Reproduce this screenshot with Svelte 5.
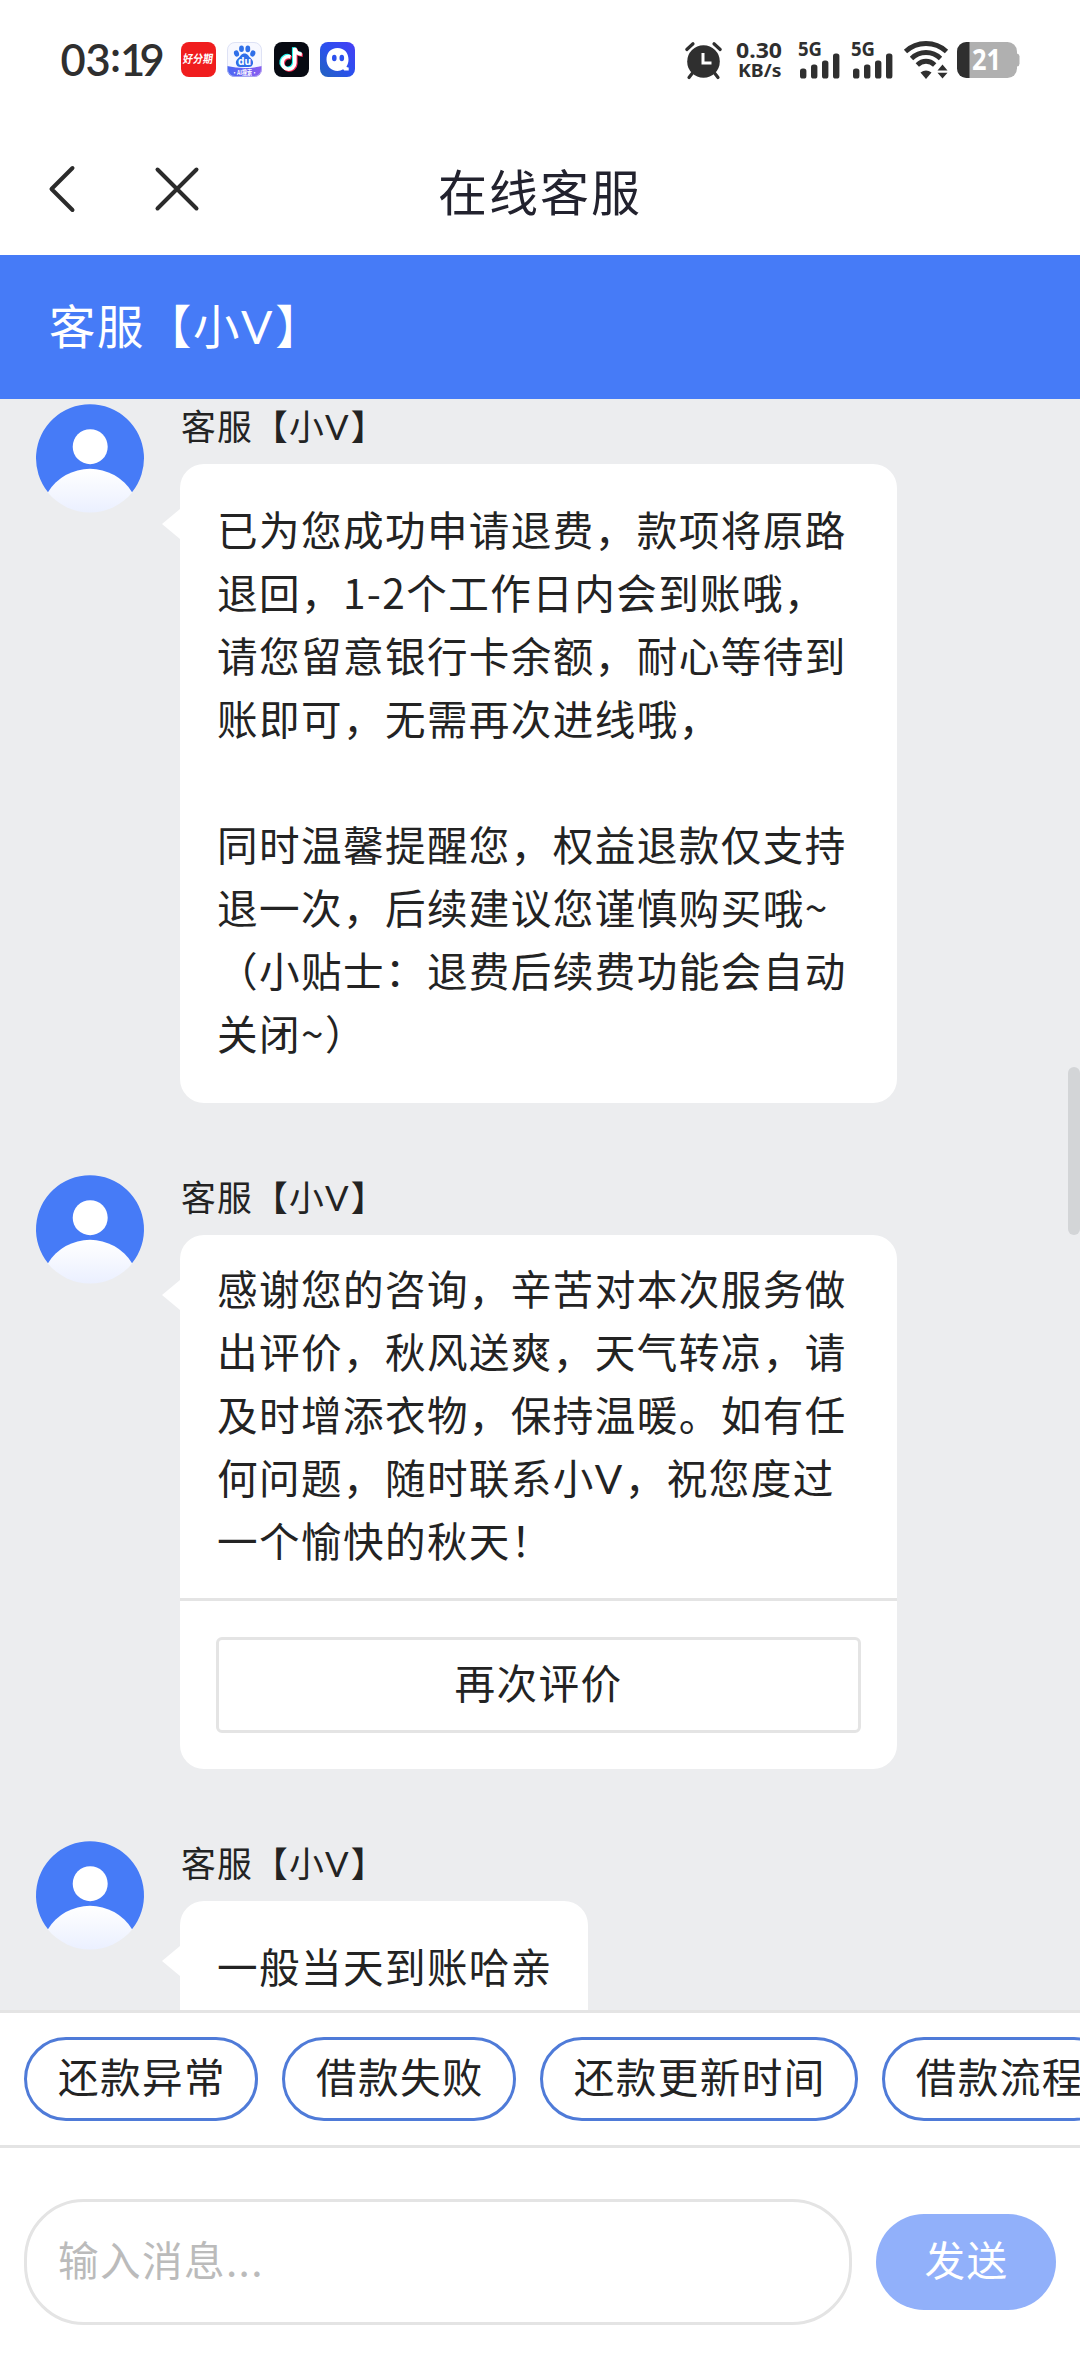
<script lang="ts">
  type Message = {
    text: string;
    rating?: boolean;
  };

  const agent = '客服【小V】';

  const messages: Message[] = [
    {
      text: `已为您成功申请退费，款项将原路
退回，1-2个工作日内会到账哦，
请您留意银行卡余额，耐心等待到
账即可，无需再次进线哦，

同时温馨提醒您，权益退款仅支持
退一次，后续建议您谨慎购买哦~
（小贴士：退费后续费功能会自动
关闭~）`,
    },
    {
      text: `感谢您的咨询，辛苦对本次服务做
出评价，秋风送爽，天气转凉，请
及时增添衣物，保持温暖。如有任
何问题，随时联系小V，祝您度过
一个愉快的秋天！`,
      rating: true,
    },
    { text: '一般当天到账哈亲' },
  ];

  const shortcuts = ['还款异常', '借款失败', '还款更新时间', '借款流程'];

  let draft = $state('');

  function send() {
    draft = '';
  }
</script>

<!-- the V of the agent name is set in a wider latin face -->
{#snippet rich(text: string)}{#each text.split('V') as part, i}{#if i > 0}<span class="latin">V</span>{/if}{part}{/each}{/snippet}

{#snippet signal()}
  <svg class="signal" width="42" height="37" viewBox="0 0 42 37">
    <text x="0" y="14" font-size="19" textLength="24" lengthAdjust="spacingAndGlyphs">5G</text>
    <rect x="2" y="26.5" width="6.4" height="10" rx="2.6" />
    <rect x="13" y="22.5" width="6.4" height="14" rx="2.6" />
    <rect x="24" y="18.5" width="6.4" height="18" rx="2.6" />
    <rect x="35" y="11.5" width="6.4" height="25" rx="2.6" />
  </svg>
{/snippet}

{#snippet avatar()}
  <svg class="avatar" width="108" height="108" viewBox="0 0 108 108">
    <defs>
      <linearGradient id="shirt" x1="0" y1="65" x2="0" y2="108" gradientUnits="userSpaceOnUse">
        <stop offset="0" stop-color="#fff" />
        <stop offset="1" stop-color="#ebf0ff" />
      </linearGradient>
    </defs>
    <path d="M12 88.2A54 54 0 1 1 96 88.2Z" fill="#467bf7" />
    <circle cx="54.2" cy="42.7" r="17.5" fill="#fff" />
    <path d="M11.800 88.400A49.500 49.500 0 0 1 96.200 88.400A54.400 54.400 0 0 1 11.800 88.400Z" fill="url(#shirt)" />
  </svg>
{/snippet}

<div class="screen">
  <div class="status">
    <svg class="clock" width="104" height="37" viewBox="0 0 104 37">
      <text x="-0.5 24.5 49 59 78.5" y="33.5 33.5 30 33.5 33.5" font-size="43.5">03:19</text>
    </svg>

    <div class="apps">
      <svg width="35" height="35" viewBox="0 0 35 35">
        <rect width="35" height="35" rx="8" fill="#f01d1e" />
        <text class="cn" x="4.500" y="21.500" font-size="11.500" font-weight="700" fill="#fff" textLength="30" lengthAdjust="spacingAndGlyphs" transform="skewX(-8)">好分期</text>
      </svg>

      <svg width="35" height="35" viewBox="0 0 35 35">
        <defs>
          <clipPath id="tile"><rect width="35" height="35" rx="8" /></clipPath>
          <linearGradient id="band" x1="0" x2="1">
            <stop offset="0" stop-color="#4a68f4" />
            <stop offset="1" stop-color="#8a5cf0" />
          </linearGradient>
        </defs>
        <g clip-path="url(#tile)">
          <rect width="35" height="35" fill="#f7f8ff" />
          <path d="M0 24Q17.500 28 35 24V35H0Z" fill="url(#band)" />
        </g>
        <rect x=".5" y=".5" width="34" height="34" rx="7.500" fill="none" stroke="#cdd3ee" stroke-width=".6" />
        <g fill="#2f6fe8">
          <ellipse cx="9.500" cy="11.500" rx="2.500" ry="3.200" transform="rotate(-18 9.500 11.500)" />
          <ellipse cx="14.500" cy="6.800" rx="2.400" ry="3.300" />
          <ellipse cx="20.800" cy="6.900" rx="2.400" ry="3.300" />
          <ellipse cx="25.800" cy="11.500" rx="2.500" ry="3.200" transform="rotate(18 25.800 11.500)" />
          <path d="M17.500 11.500c3 0 4 2.500 5.500 4s3.500 3 3 6c-.5 2.500-2 3.600-4.500 3.500h-8c-2.500.1-4-1-4.500-3.500-.5-3 1.500-4.500 3-6s2.500-4 5.500-4Z" />
        </g>
        <text x="11" y="23" font-size="10" font-weight="700" fill="#fff" textLength="13" lengthAdjust="spacingAndGlyphs">du</text>
        <text class="cn" x="5" y="32.800" font-size="6.500" font-weight="700" fill="#fff" textLength="25" lengthAdjust="spacingAndGlyphs">·AI搜索·</text>
      </svg>

      <svg width="35" height="35" viewBox="0 0 35 35">
        <rect width="35" height="35" rx="8" fill="#070a12" />
        <g fill="none" stroke-width="3.600">
          <path d="M16.500 14.800a6.300 6.300 0 1 0 4.300 6.200V6c.5 3.500 3.200 6 7 6.300" stroke="#25f4ee" transform="translate(-1.100 -.8)" />
          <path d="M16.500 14.800a6.300 6.300 0 1 0 4.300 6.200V6c.5 3.500 3.200 6 7 6.300" stroke="#fe2c55" transform="translate(1 .9)" />
          <path d="M16.500 14.800a6.300 6.300 0 1 0 4.300 6.200V6c.5 3.500 3.200 6 7 6.300" stroke="#fff" />
        </g>
      </svg>

      <svg width="35" height="35" viewBox="0 0 35 35">
        <defs>
          <linearGradient id="chat" x1="0" y1="1" x2="1" y2="0">
            <stop offset="0" stop-color="#2263bd" />
            <stop offset=".5" stop-color="#2b50ee" />
            <stop offset="1" stop-color="#473df5" />
          </linearGradient>
        </defs>
        <rect width="35" height="35" rx="8" fill="url(#chat)" />
        <path d="M17.500 6C24.500 6 28.500 11 28.500 17.500c0 2.800-.7 5-2 7 .3.800 1 1 2.200.9v3.100h-4.500l-1-1.200A11.300 11.300 0 0 1 17.500 29C11 29 6.500 24 6.500 17.500S10.500 6 17.500 6Z" fill="#fff" />
        <ellipse cx="14.300" cy="16" rx="2.300" ry="3.200" fill="#2b50ee" />
        <ellipse cx="21.800" cy="16" rx="2.300" ry="3.200" fill="#2b50ee" />
      </svg>
    </div>

    <div class="system">
      <svg class="alarm" width="37" height="37" viewBox="0 0 37 37">
        <circle cx="18.500" cy="19.500" r="16.300" />
        <path d="M1.800 7.500 8 1.800M35.200 7.500 29 1.800" stroke-width="3.200" />
        <path d="M7.500 31 4 35.500M29.500 31 33 35.500" stroke-width="3.200" />
        <path d="M18 11v10h8.500" class="hands" />
      </svg>

      <svg class="speed" width="46" height="37" viewBox="0 0 46 37">
        <text x="0" y="16" font-size="22" textLength="46" lengthAdjust="spacingAndGlyphs">0.30</text>
        <text x="2" y="35" font-size="18" textLength="43.500" lengthAdjust="spacingAndGlyphs">KB/s</text>
      </svg>

      {@render signal()}
      {@render signal()}

      <svg class="wifi" width="44" height="37" viewBox="0 0 44 37">
        <path d="M1.500 9.500C13-1.200 31-1.200 42.500 9.500" />
        <path d="M7.500 16.500C15.500 8.500 28.500 8.500 36.500 16.500" />
        <path d="M13.300 23C18.500 18 25.500 18 30.700 23" />
        <path class="solid" d="M16.500 30.500Q22 26.500 27.500 30.500L22 37Z" />
        <path class="solid" d="M33.500 28.500 38.500 22.500 43.500 28.500ZM33.500 30.800H43.500L38.500 36.500Z" />
      </svg>

      <svg class="battery" width="64" height="36" viewBox="0 0 64 36">
        <defs>
          <clipPath id="cell"><rect width="60" height="36" rx="9.500" /></clipPath>
        </defs>
        <g clip-path="url(#cell)">
          <rect width="60" height="36" fill="#b0b0b0" />
          <rect width="12.500" height="36" fill="#2f2f2f" />
        </g>
        <path d="M60 11.500q2.500.5 2.500 3v7q0 2.500-2.500 3Z" fill="#b0b0b0" />
        <text x="15" y="28" font-size="28" textLength="29" lengthAdjust="spacingAndGlyphs" fill="#fff">21</text>
      </svg>
    </div>
  </div>

  <nav class="nav">
    <button class="nav-btn" aria-label="返回">
      <svg width="28" height="50" viewBox="0 0 28 50">
        <path d="M24.500 4 3.500 25 24.500 46" />
      </svg>
    </button>
    <button class="nav-btn" aria-label="关闭">
      <svg width="46" height="46" viewBox="0 0 46 46">
        <path d="M3.500 3.500 42.500 42.500M42.500 3.500 3.500 42.500" />
      </svg>
    </button>
    <h1>在线客服</h1>
  </nav>

  <header class="agent-bar">{@render rich(agent)}</header>

  <main class="chat">
    {#each messages as message}
      <article class="message">
        {@render avatar()}
        <div class="content">
          <div class="name">{@render rich(agent)}</div>
          <div class="bubble">
            <p class:compact={message.rating}>{@render rich(message.text)}</p>
            {#if message.rating}
              <div class="actions">
                <button class="rate">再次评价</button>
              </div>
            {/if}
          </div>
        </div>
      </article>
    {/each}
    <div class="scrollbar"></div>
  </main>

  <div class="shortcuts">
    {#each shortcuts as label}
      <button class="chip">{label}</button>
    {/each}
  </div>

  <footer class="composer">
    <input bind:value={draft} placeholder="输入消息..." aria-label="输入消息" />
    <button class="send" onclick={send}>发送</button>
  </footer>
</div>

<style>
  :global(body) {
    margin: 0;
    background: #fff;
  }
  .screen {
    display: flex;
    flex-direction: column;
    width: 1080px;
    height: 2376px;
    overflow: hidden;
    background: #fff;
    color: #232323;
    font-family: 'Noto Sans CJK SC', sans-serif;
    font-size: 40.6px;
    letter-spacing: 1.4px;
    line-height: 63px;
  }
  button,
  input {
    box-sizing: border-box;
    margin: 0;
    padding: 0;
    border: 0;
    background: none;
    color: inherit;
    font: inherit;
    letter-spacing: inherit;
  }
  svg {
    display: block;
    flex: none;
    overflow: visible;
  }
  .latin {
    font-family: Lato, sans-serif;
    letter-spacing: 0.06em;
    line-height: 1;
  }

  .status {
    display: flex;
    align-items: flex-start;
    box-sizing: border-box;
    flex: none;
    height: 120px;
    padding: 42px 59px 0 61px;
    color: #2f2f2f;
    font-family: 'Noto Sans', sans-serif;
    font-weight: 700;
    letter-spacing: 0;
  }
  .status svg {
    fill: #2f2f2f;
  }
  .clock {
    font-family: Lato, sans-serif;
    font-weight: 600;
  }
  .cn {
    font-family: 'Noto Sans CJK SC', sans-serif;
  }
  .apps {
    display: flex;
    gap: 11.6px;
    margin-left: 15.5px;
  }
  .system {
    display: flex;
    margin-left: auto;
  }
  .alarm {
    stroke: #2f2f2f;
    stroke-width: 0;
    stroke-linecap: round;
  }
  .alarm .hands {
    fill: none;
    stroke: #fff;
    stroke-width: 3;
    stroke-linecap: butt;
  }
  .speed {
    margin-left: 14px;
  }
  .signal {
    margin-left: 16px;
  }
  .signal + .signal {
    margin-left: 11px;
  }
  .status .wifi {
    margin-left: 11px;
    fill: none;
    stroke: #2f2f2f;
    stroke-width: 4.8;
  }
  .status .wifi .solid {
    fill: #2f2f2f;
    stroke: none;
  }
  .battery {
    margin-left: 9px;
  }

  .nav {
    display: grid;
    grid-template-columns: 86px 86px 1fr 172px;
    align-items: center;
    box-sizing: border-box;
    flex: none;
    height: 135px;
    padding: 0 48px;
  }
  .nav-btn {
    display: flex;
    height: 50px;
    align-items: center;
    margin-top: 3px;
  }
  .nav-btn + .nav-btn {
    margin-left: 20px;
  }
  .nav-btn path {
    fill: none;
    stroke: #2b2b2b;
    stroke-width: 4;
    stroke-linecap: round;
    stroke-linejoin: round;
  }
  h1 {
    margin: 4px 0 0;
    color: #22222e;
    font-size: 49px;
    font-weight: 400;
    letter-spacing: 2px;
    text-align: center;
  }

  .agent-bar {
    flex: none;
    height: 144px;
    padding-left: 49px;
    background: #467bf7;
    color: #fff;
    font-size: 46.4px;
    letter-spacing: 1.6px;
    line-height: 138px;
  }

  .chat {
    position: relative;
    display: flex;
    flex: 1;
    flex-direction: column;
    gap: 72px;
    min-height: 0;
    padding: 5px 36px 0;
    overflow: hidden;
    background: #ecedef;
  }
  .message {
    display: flex;
    flex: none;
    gap: 36px;
  }
  .name {
    height: 48px;
    margin-bottom: 12px;
    padding-left: 1px;
    font-size: 34.8px;
    letter-spacing: 1.2px;
    line-height: 43px;
  }
  .bubble {
    position: relative;
    width: fit-content;
    max-width: 717px;
    border-radius: 24px;
    background: #fff;
  }
  .bubble::before {
    position: absolute;
    top: 45px;
    left: -18px;
    width: 18px;
    height: 30px;
    background: #fff;
    clip-path: polygon(100% 0, 0 50%, 100% 100%);
    content: '';
  }
  .message:first-child .bubble {
    width: 717px;
  }
  p {
    box-sizing: border-box;
    margin: 0;
    padding: 33px 35px 39px 37px;
    white-space: pre;
  }
  p.compact {
    width: 717px;
    padding: 21px 35px 27px 37px;
  }
  .actions {
    padding: 36px;
    border-top: 3px solid #e4e4e4;
  }
  .rate {
    display: block;
    width: 100%;
    height: 96px;
    padding-bottom: 7px;
    border: 3px solid #e4e4e4;
    border-radius: 6px;
  }
  .scrollbar {
    position: absolute;
    top: 668px;
    right: 0;
    width: 12px;
    height: 168px;
    border-radius: 6px;
    background: #d3d5d7;
  }

  .shortcuts {
    display: flex;
    flex: none;
    gap: 24px;
    padding: 24px;
    overflow: hidden;
    border-top: 3px solid #e4e4e4;
    border-bottom: 3px solid #e4e4e4;
  }
  .chip {
    flex: none;
    height: 84px;
    padding: 0 29px 7px 31px;
    border: 3px solid #4f7bd8;
    border-radius: 42px;
    white-space: nowrap;
  }

  .composer {
    display: flex;
    align-items: center;
    gap: 24px;
    box-sizing: border-box;
    flex: none;
    height: 228px;
    padding: 0 24px;
  }
  input {
    flex: 1;
    min-width: 0;
    height: 126px;
    padding: 0 30px 7px 31px;
    border: 3px solid #e4e4e4;
    border-radius: 60px;
    outline: none;
  }
  input::placeholder {
    color: #bbb;
    opacity: 1;
  }
  .send {
    width: 180px;
    height: 96px;
    padding: 0 0 7px 1px;
    border-radius: 48px;
    background: #91b0fa;
    color: #fff;
  }
</style>
